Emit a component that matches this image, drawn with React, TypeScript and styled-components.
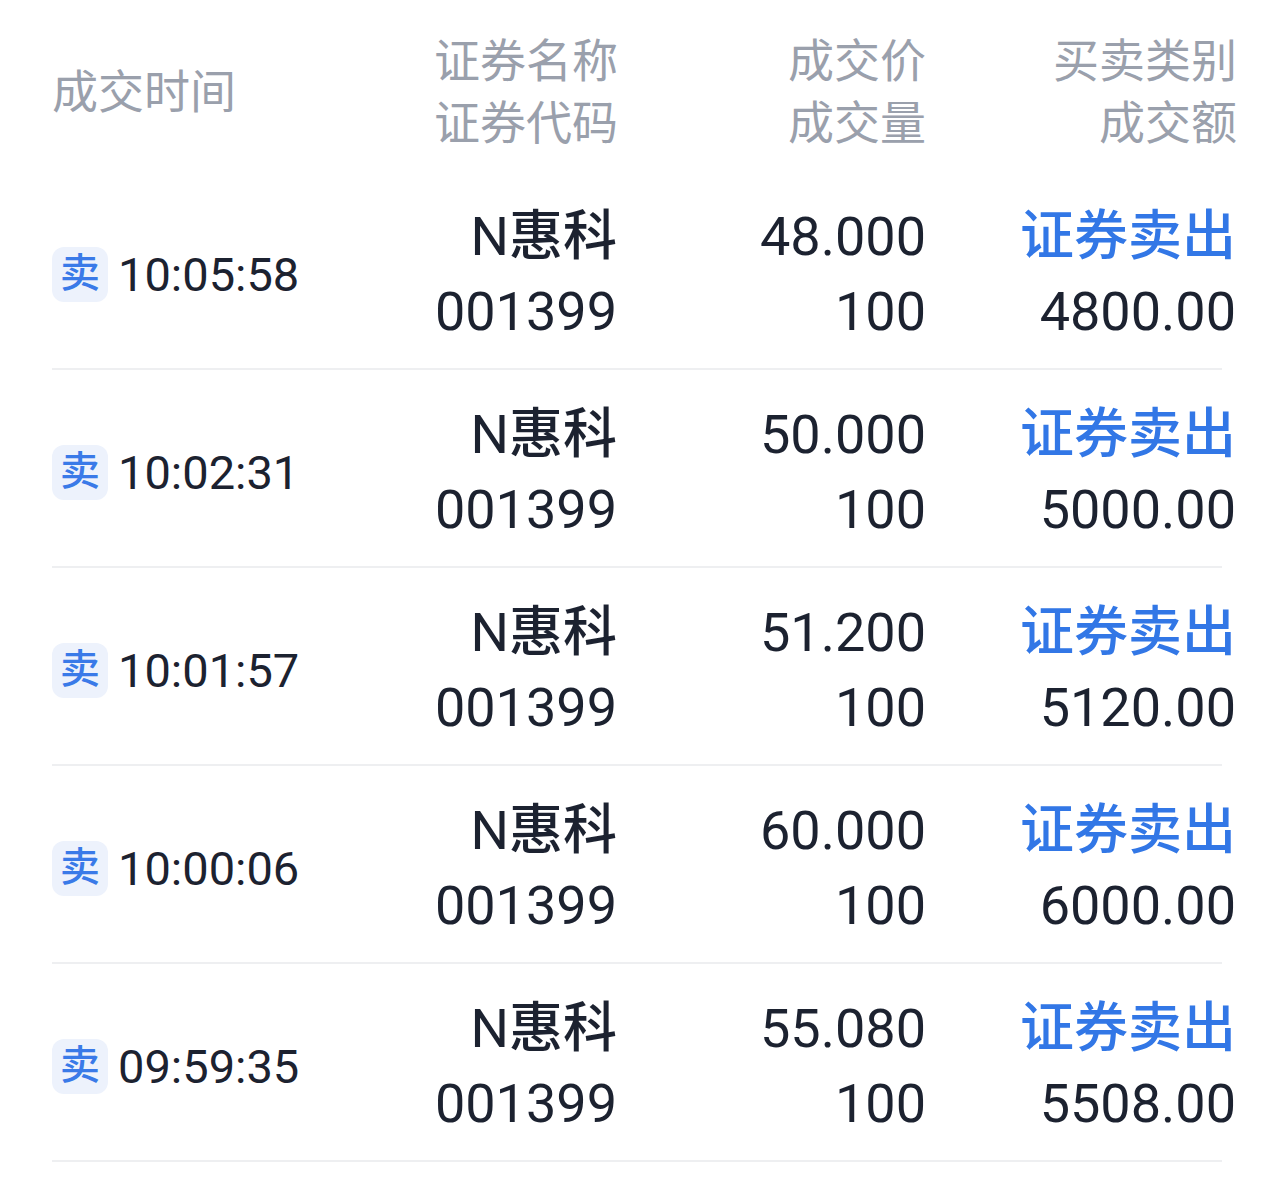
import React from "react";
import styled, { createGlobalStyle } from "styled-components";

const Global = createGlobalStyle`
  html, body { margin: 0; padding: 0; background: #ffffff; }
  body { font-family: Roboto, "Noto Sans CJK SC", sans-serif; }
`;

const CJK = `Roboto, "Noto Sans CJK SC", sans-serif`;

const Page = styled.div`
  width: 1272px;
  padding: 0 50px 0 52px;
  box-sizing: border-box;
  background: #fff;
`;

const Grid = styled.div`
  display: grid;
  grid-template-columns: 348px 217px 309px 296px;
  align-items: center;
`;

const Header = styled(Grid)`
  padding: 30px 0 18px;
`;

const HeadCell = styled.div<{ $align?: "left" | "right"; $shift?: number }>`
  font-family: ${CJK};
  font-size: 46px;
  line-height: 62px;
  color: #9aa0ac;
  text-align: ${(p) => p.$align ?? "right"};
  margin-right: ${(p) => (p.$shift ? -p.$shift : 0)}px;
  white-space: nowrap;
`;

const RowGrid = styled(Grid)`
  padding: 27px 0 19px;
`;

const Divider = styled.div`
  height: 2px;
  background: #eeeff1;
`;

const TimeCell = styled.div`
  display: flex;
  align-items: center;
  gap: 10px;
`;

const Badge = styled.span`
  width: 56px;
  height: 55px;
  border-radius: 12px;
  background: #edf2fc;
  color: #3a7ae8;
  font-family: ${CJK};
  font-size: 40px;
  font-weight: 500;
  display: flex;
  align-items: center;
  justify-content: center;
  line-height: 1;
`;

const Time = styled.span`
  font-family: ${CJK};
  font-size: 47px;
  color: #1c2230;
  line-height: 1;
`;

const Cell = styled.div<{ $shift?: number }>`
  text-align: right;
  margin-right: ${(p) => (p.$shift ? -p.$shift : 0)}px;
  white-space: nowrap;
`;

const Line = styled.div<{ $blue?: boolean }>`
  font-family: ${CJK};
  font-size: 54px;
  font-weight: 500;
  line-height: 75px;
  color: ${(p) => (p.$blue ? "#3277e6" : "#1c2230")};
`;

const NumLine = styled(Line)`
  font-weight: 400;
`;

const Latin = styled.span`
  font-weight: 400;
`;

type Trade = { time: string; price: string; amount: string };

const trades: Trade[] = [
  { time: "10:05:58", price: "48.000", amount: "4800.00" },
  { time: "10:02:31", price: "50.000", amount: "5000.00" },
  { time: "10:01:57", price: "51.200", amount: "5120.00" },
  { time: "10:00:06", price: "60.000", amount: "6000.00" },
  { time: "09:59:35", price: "55.080", amount: "5508.00" },
];

export default function App() {
  return (
    <>
      <Global />
      <Page>
        <Header>
          <HeadCell $align="left">成交时间</HeadCell>
          <HeadCell $shift={1}>
            证券名称
            <br />
            证券代码
          </HeadCell>
          <HeadCell>
            成交价
            <br />
            成交量
          </HeadCell>
          <HeadCell $shift={15}>
            买卖类别
            <br />
            成交额
          </HeadCell>
        </Header>
        {trades.map((t) => (
          <div key={t.time}>
            <RowGrid>
              <TimeCell>
                <Badge>卖</Badge>
                <Time>{t.time}</Time>
              </TimeCell>
              <Cell>
                <Line>
                  <Latin>N</Latin>惠科
                </Line>
                <NumLine>001399</NumLine>
              </Cell>
              <Cell>
                <NumLine>{t.price}</NumLine>
                <NumLine>100</NumLine>
              </Cell>
              <Cell $shift={14}>
                <Line $blue>证券卖出</Line>
                <NumLine>{t.amount}</NumLine>
              </Cell>
            </RowGrid>
            <Divider />
          </div>
        ))}
      </Page>
    </>
  );
}
